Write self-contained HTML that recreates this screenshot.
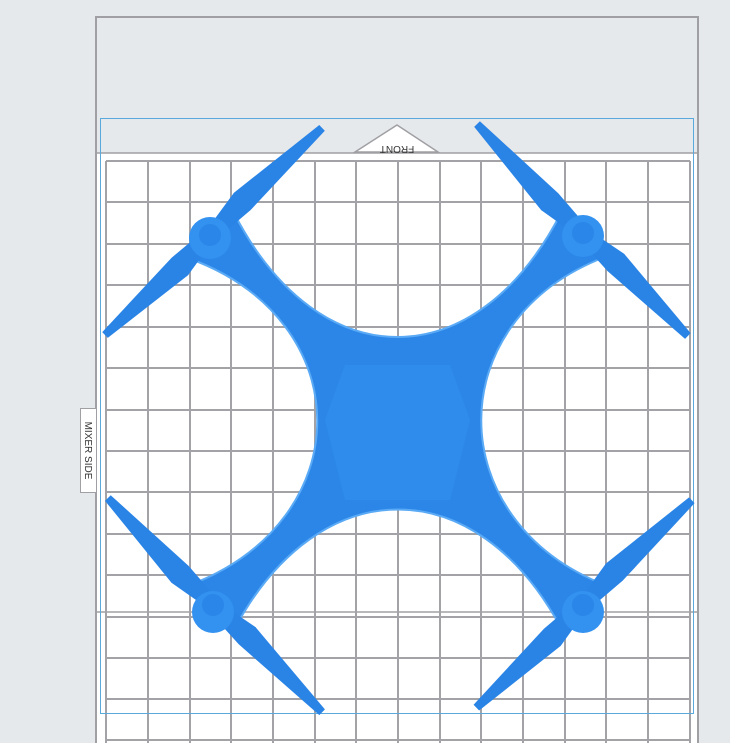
<!DOCTYPE html>
<html><head><style>
html,body{margin:0;padding:0;width:730px;height:743px;overflow:hidden;background:#e6e9ec;font-family:"Liberation Sans",sans-serif}
</style></head><body>
<svg width="730" height="743" xmlns="http://www.w3.org/2000/svg" style="position:absolute;left:0;top:0">
<defs>
<path id="bl" d="M0.08,-8 L0.3,-14 L1,-4 L1,4 L0.3,10 L0.08,8Z"/>
</defs>
<rect x="96" y="153" width="602" height="600" fill="#ffffff"/>
<polyline points="96,743 96,17 698,17 698,743" fill="none" stroke="#a0a0a4" stroke-width="2"/>
<line x1="96" y1="153" x2="698" y2="153" stroke="#a0a0a4" stroke-width="1.5"/>
<line x1="96" y1="612" x2="698" y2="612" stroke="#a0a0a4" stroke-width="1.5"/>
<g stroke="#a3a3a7" stroke-width="2" fill="none">
<path d="M106,161V743M148,161V743M190,161V743M231,161V743M273,161V743M315,161V743M356,161V743M398,161V743M440,161V743M481,161V743M523,161V743M565,161V743M606,161V743M648,161V743M690,161V743"/>
<path d="M106,161H690M106,202H690M106,244H690M106,285H690M106,327H690M106,368H690M106,410H690M106,451H690M106,492H690M106,534H690M106,575H690M106,617H690M106,658H690M106,699H690M106,740H690"/>
</g>
<rect x="100.5" y="118.5" width="593" height="595" fill="none" stroke="#5aa9dc" stroke-width="1"/>
<polygon points="355,152 397,125 438,152" fill="#fff" stroke="#a0a0a4" stroke-width="1.5"/>
<text x="397" y="143" font-size="10" fill="#333" text-anchor="middle" transform="rotate(180 397 143)" dy="-3">FRONT</text>
<rect x="80.5" y="408.5" width="16" height="84" fill="#fff" stroke="#a0a0a4"/>
<text x="88.5" y="450.5" font-size="10" fill="#333" text-anchor="middle" transform="rotate(90 88.5 450.5)" dy="3.5">MIXER SIDE</text>
<g fill="#2b86e8">
<path d="M188,258 L235,215 C320,378 476,378 561,213 L605,257 C440,320 440,520 605,585 L561,628 C476,470 320,470 235,628 L190,585 C360,520 360,320 188,258 Z" stroke="#5aaaf5" stroke-width="2"/>
<path d="M345,365 L450,365 L470,420 L450,500 L345,500 L325,420 Z" fill="#2f8cec"/>
<g fill="#2a84e6">
<use href="#bl" transform="translate(210,235) rotate(-43.7) scale(155,1)"/>
<use href="#bl" transform="translate(210,235) rotate(136.4) scale(145,1)"/>
<use href="#bl" transform="translate(583,233) rotate(-134.2) scale(152,1)"/>
<use href="#bl" transform="translate(583,233) rotate(44.5) scale(147,1)"/>
<use href="#bl" transform="translate(213,605) rotate(-134.5) scale(150,1)"/>
<use href="#bl" transform="translate(213,605) rotate(44.5) scale(153,1)"/>
<use href="#bl" transform="translate(583,605) rotate(-43.9) scale(151,1)"/>
<use href="#bl" transform="translate(583,605) rotate(136.1) scale(148,1)"/>
</g>
<circle cx="210" cy="238" r="21" fill="#3391f0"/>
<circle cx="210" cy="235" r="11" fill="#2a86e8"/>
<circle cx="583" cy="236" r="21" fill="#3391f0"/>
<circle cx="583" cy="233" r="11" fill="#2a86e8"/>
<circle cx="213" cy="612" r="21" fill="#3391f0"/>
<circle cx="213" cy="605" r="11" fill="#2a86e8"/>
<circle cx="583" cy="612" r="21" fill="#3391f0"/>
<circle cx="583" cy="605" r="11" fill="#2a86e8"/>
</g>
</svg>
</body></html>
